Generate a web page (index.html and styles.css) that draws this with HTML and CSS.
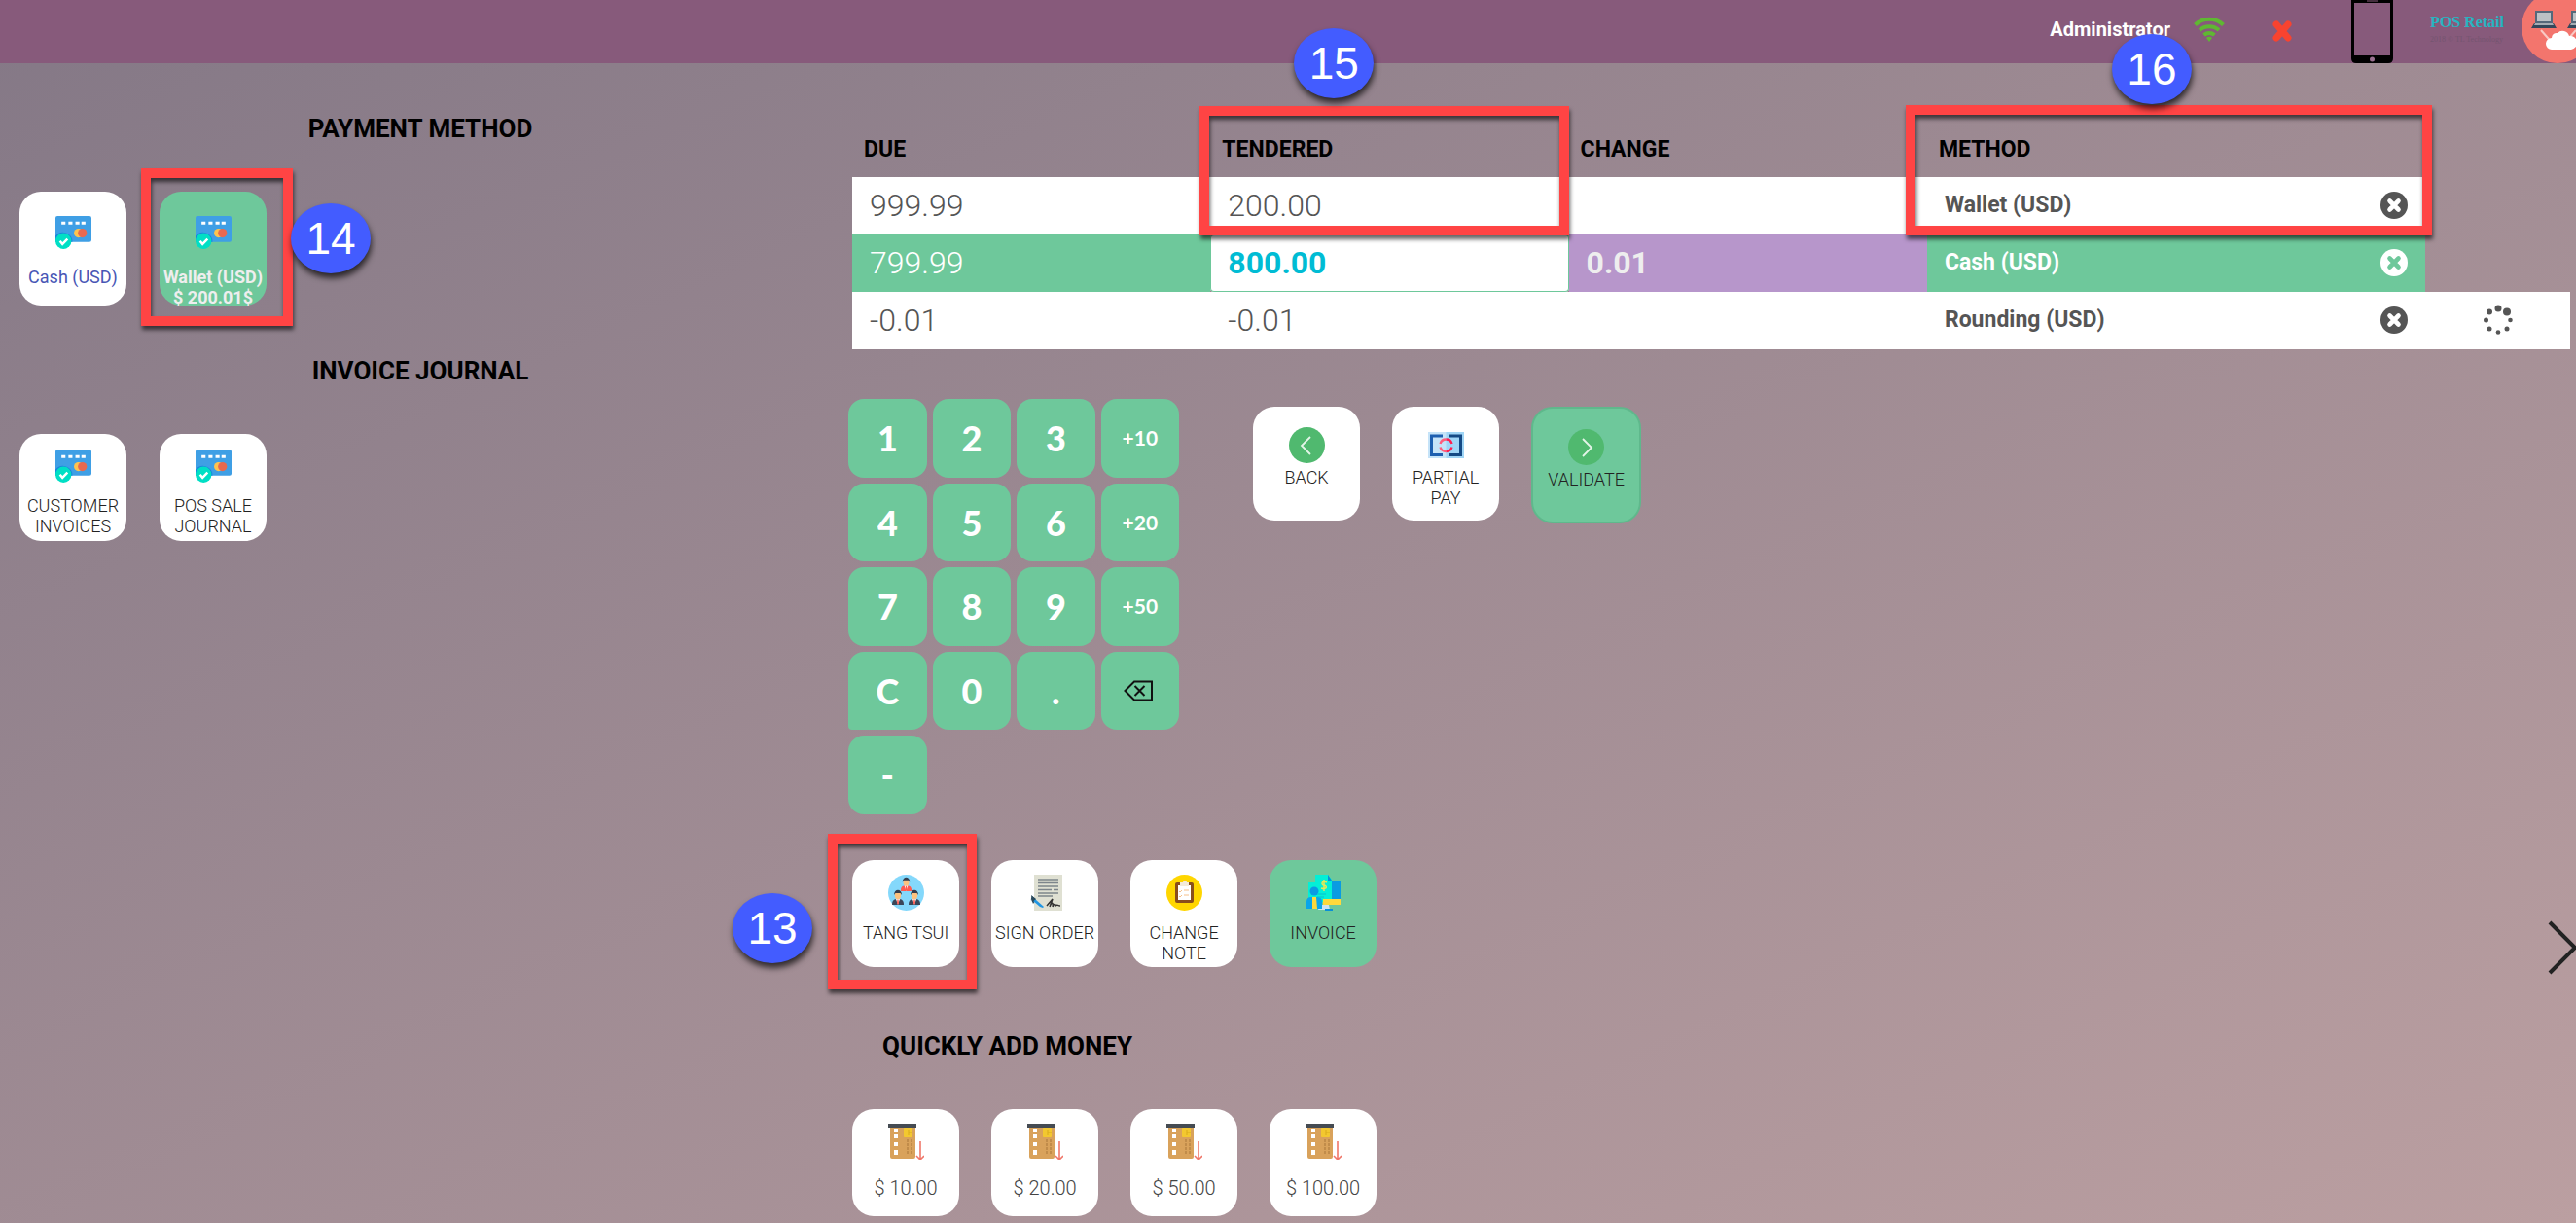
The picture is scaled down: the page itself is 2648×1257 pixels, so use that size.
FILE: index.html
```html
<!DOCTYPE html>
<html lang="en">
<head>
<meta charset="utf-8">
<meta name="viewport" content="width=device-width, initial-scale=1">
<title>POS Retail - Payment</title>
<link rel="stylesheet" href="styles.css">
</head>
<body>
<svg class="sprite" aria-hidden="true">
  <symbol id="i-card" viewBox="0 0 36 36">
    <rect x="0" y="2" width="36" height="26" rx="2" fill="#3f9fe5"/>
    <path d="M6 9h4M13 9h4M20 9h4M26 9h4" stroke="#fff" stroke-width="3"/>
    <path d="M0 22A9.500 9.500 0 0 1 17 28H0z" fill="#1b83dc"/>
    <circle cx="23" cy="19" r="4.500" fill="#ffc34d"/>
    <circle cx="27" cy="19" r="4.500" fill="#e8694f"/>
    <circle cx="8" cy="27" r="8" fill="#00dfc5"/>
    <path d="M4.500 27l2.500 3 5-5" fill="none" stroke="#fff" stroke-width="2.400"/>
  </symbol>
  <symbol id="i-remove" viewBox="0 0 28 28">
    <circle cx="14" cy="14" r="14" fill="currentColor"/>
    <path d="M9.500 9.500l9 9M18.500 9.500l-9 9" stroke="var(--cross)" stroke-width="4.600" stroke-linecap="round"/>
  </symbol>
  <symbol id="i-slot" viewBox="0 0 37 37">
    <rect x="2" y="1" width="26" height="35" rx="2" fill="#d9a25b"/>
    <rect x="0" y="0" width="29" height="4" fill="#454b52"/>
    <path d="M6 5h4v3H6zM6 11h4v4H6zM6 19h4v4H6zM6 27h4v5H6z" fill="#fff"/>
    <rect x="16" y="4" width="9" height="10" rx="1" fill="#f3c82f"/>
    <path d="M21 6v6M21 9h4" stroke="#d9aa1c" stroke-width="1"/>
    <path d="M20 16v16M24 16v16" stroke="#b98546" stroke-width="1.500" stroke-dasharray="3 1"/>
    <path d="M33 18v19M29 33l4 4 4-4" fill="none" stroke="#f0776a" stroke-width="1.600"/>
  </symbol>
  <symbol id="i-person" viewBox="0 0 14 16">
    <path d="M1 16c0-5 2-6 6-6s6 1 6 6z" fill="var(--suit)"/>
    <path d="M5 10h4l-2 6z" fill="#fff"/>
    <path d="M6.400 10.500h1.200L8 14l-1 2-1-2z" fill="#ff5a4f"/>
    <ellipse cx="7" cy="6" rx="3.200" ry="4.200" fill="#fdc27f"/>
    <path d="M3 6c0-7 8-7 8 0L9.500 4h-5z" fill="#343d4d"/>
  </symbol>
</svg>

<header class="topbar">
  <span class="user">Administrator</span>
  <svg class="wifi" width="32" height="26" viewBox="0 0 32 26" role="img" aria-label="Online">
    <g fill="none" stroke="#5fb832" stroke-width="4">
      <path d="M1.500 8.500A21 21 0 0 1 30.500 8.500"/>
      <path d="M6 14A15 15 0 0 1 26 14"/>
      <path d="M10.500 19A9 9 0 0 1 21.500 19"/>
    </g>
    <path d="M13 22a4.500 4.500 0 0 1 6 0l-3 4z" fill="#5fb832"/>
  </svg>
  <button class="close" aria-label="Close session"><svg width="20" height="22" viewBox="0 0 20 22"><path d="M4 4l12 14M16 4L4 18" stroke="#f8432f" stroke-width="7" stroke-linecap="round"/></svg></button>
  <svg class="phone" width="43" height="65" viewBox="0 0 43 65" role="img" aria-label="Mobile">
    <path d="M0 0h43v60q0 5-5 5H5q-5 0-5-5zM3 3v54h37V3z" fill="#000" fill-rule="evenodd"/>
    <path d="M16 1h11" stroke="#875a7b" stroke-width="1"/>
    <circle cx="21.500" cy="61" r="2.500" fill="#9a6f90"/>
  </svg>
  <a class="brand" href="#">POS Retail<small>2018 © TL Technology</small></a>
  <svg class="cloud" width="74" height="74" viewBox="0 0 74 74" role="img" aria-label="Sync">
    <circle cx="37" cy="37" r="37" fill="#f3756d"/>
    <path d="M20 40l14 16M56 40L42 56" stroke="#f9c9c4" stroke-width="2"/>
    <g id="laptop"><rect x="14" y="20" width="18" height="13" fill="#55687a"/><rect x="16" y="22" width="14" height="9" fill="#bcc1c5"/><path d="M13 33h20l3 5H10z" fill="#33475b"/><path d="M14 33h18l1 2H13z" fill="#a5adb4"/></g>
    <use href="#laptop" x="37"/>
    <path d="M31 60a6 6 0 0 1 0-12 5 5 0 0 1 6-5 7 7 0 0 1 12 3 7 7 0 0 1 2 14z" fill="#fff"/>
  </svg>
</header>

<main class="layout">
  <section class="side">
    <h2>Payment Method</h2>
    <div class="tiles pay">
      <button class="tile tall cash"><svg><use href="#i-card"/></svg><span>Cash (USD)</span></button>
      <div class="anchor">
        <button class="tile tall wallet"><svg><use href="#i-card"/></svg><span>Wallet (USD)<br>$ 200.01$</span></button>
        <i class="frame frame-14"></i><b class="step step-14">14</b>
      </div>
    </div>
    <h2>Invoice Journal</h2>
    <div class="tiles">
      <button class="tile"><svg><use href="#i-card"/></svg><span>CUSTOMER INVOICES</span></button>
      <button class="tile"><svg><use href="#i-card"/></svg><span>POS SALE JOURNAL</span></button>
    </div>
  </section>

  <section class="work">
    <table class="lines">
      <colgroup><col><col><col><col class="c-method"><col class="c-extra"></colgroup>
      <thead>
        <tr>
          <th>Due</th>
          <th class="anchor">Tendered<i class="frame frame-15"></i><b class="step step-15">15</b></th>
          <th>Change</th>
          <th class="anchor">Method<i class="frame frame-16"></i><b class="step step-16">16</b></th>
          <td></td>
        </tr>
      </thead>
      <tbody>
        <tr>
          <td>999.99</td><td>200.00</td><td></td>
          <td class="method"><div>Wallet (USD)<button aria-label="Remove Wallet"><svg width="28" height="28"><use href="#i-remove"/></svg></button></div></td>
          <td class="none"></td>
        </tr>
        <tr class="selected">
          <td>799.99</td><td class="edit">800.00</td><td class="change">0.01</td>
          <td class="method"><div>Cash (USD)<button aria-label="Remove Cash"><svg width="28" height="28"><use href="#i-remove"/></svg></button></div></td>
          <td class="none"></td>
        </tr>
        <tr>
          <td>-0.01</td><td>-0.01</td><td></td>
          <td class="method"><div>Rounding (USD)<button aria-label="Remove Rounding"><svg width="28" height="28"><use href="#i-remove"/></svg></button></div></td>
          <td class="busy"><svg width="32" height="32" viewBox="0 0 32 32" role="img" aria-label="Loading"><g fill="#555"><circle cx="16" cy="4" r="3.500"/><circle cx="25" cy="7.500" r="4"/><circle cx="28.500" cy="16" r="2.300"/><circle cx="25" cy="25" r="2.500"/><circle cx="16" cy="28.500" r="2.300"/><circle cx="7" cy="25" r="2.500"/><circle cx="3.500" cy="16" r="2.500"/><circle cx="7" cy="7.500" r="3"/></g></svg></td>
        </tr>
      </tbody>
    </table>

    <div class="controls">
      <div class="keypad">
        <button>1</button><button>2</button><button>3</button><button class="add">+10</button>
        <button>4</button><button>5</button><button>6</button><button class="add">+20</button>
        <button>7</button><button>8</button><button>9</button><button class="add">+50</button>
        <button class="clear">C</button><button>0</button><button>.</button>
        <button aria-label="Backspace"><svg width="34" height="22" viewBox="0 0 34 22" fill="none" stroke="#111" stroke-width="2"><path d="M1.500 11L11 1.500h18v19H11z"/><path d="M11.500 6l10 10M21.500 6l-10 10"/></svg></button>
        <button>-</button>
      </div>
      <div class="tiles actions">
        <button class="tile tall"><svg viewBox="0 0 37 37"><circle cx="18.500" cy="18.500" r="18.500" fill="#50b96f"/><path d="M22 10l-9 9 9 9" fill="none" stroke="#e4f5e8" stroke-width="1.800"/></svg><span>BACK</span></button>
        <button class="tile tall"><svg viewBox="0 0 37 37"><path d="M0 5h37v27H0z" fill="#c5e3f8"/><path d="M18.500 5H37v27H18.500z" fill="#9fd5f6"/><path d="M15 9H3.500v19.500H15" fill="none" stroke="#1d5fb0" stroke-width="3"/><path d="M22 9h11.500v19.500H22" fill="none" stroke="#154a85" stroke-width="3"/><g fill="none" stroke-width="2.400"><path d="M12.500 17a6.300 6.300 0 0 1 6-4.500M12.500 20.500a6.300 6.300 0 0 0 6 4.500" stroke="#ff5d7d"/><path d="M24.500 17a6.300 6.300 0 0 0-6-4.500M24.500 20.500a6.300 6.300 0 0 1-6 4.500" stroke="#ff1f4f"/></g></svg><span>PARTIAL PAY</span></button>
        <button class="tile validate"><svg viewBox="0 0 37 37"><circle cx="18.500" cy="18.500" r="18.500" fill="#50b96f"/><path d="M15 10l9 9-9 9" fill="none" stroke="#e4f5e8" stroke-width="1.800"/></svg><span>VALIDATE</span></button>
      </div>
    </div>

    <div class="tiles options">
      <div class="anchor">
        <button class="tile"><svg viewBox="0 0 37 37"><circle cx="18.500" cy="18.500" r="18.500" fill="#84d8fb"/><use class="red" href="#i-person" x="12" y="2" width="13" height="15"/><use href="#i-person" x="3" y="15" width="14" height="16"/><use href="#i-person" x="20" y="15" width="14" height="16"/></svg><span>TANG TSUI</span></button>
        <i class="frame frame-13"></i><b class="step step-13">13</b>
      </div>
      <button class="tile"><svg viewBox="0 0 37 37"><path d="M7 0h29v37H7z" fill="#dfe0d2"/><path d="M11 5h21M11 8.500h21M11 12h21M11 15.500h14M27 15.500h5M11 19h21M11 22h15" stroke="#7d858b" stroke-width="1.500"/><path d="M5 22l4 4-3 4-2-5-1 2z" fill="#2b4a5c"/><path d="M8 25l9 8-1 1-3-1-7-6z" fill="#2196e3"/><path d="M4 21l5 4-4 3z" fill="#2b4a5c"/><path d="M20 32l6-7-3 8c2-5 4-5 3 0 2-4 3-3 3-1 2-2 2 0 5 0" fill="none" stroke="#333" stroke-width="1.500"/></svg><span>SIGN ORDER</span></button>
      <button class="tile"><svg viewBox="0 0 37 37"><circle cx="18.500" cy="18.500" r="18.500" fill="#ffd600"/><rect x="9" y="8" width="19" height="21" rx="2" fill="#8a4e1c"/><path d="M12 11h13v15H12z" fill="#fff"/><path d="M14 8h3a2 2 0 0 1 4 0h2v4h-9z" fill="#f3ead9"/><path d="M13 17l1 1 2-2M13 22l1 1 2-2M18 16h5M18 21h5" fill="none" stroke="#f5c08a" stroke-width="1"/></svg><span>CHANGE NOTE</span></button>
      <button class="tile green"><svg viewBox="0 0 37 37"><path d="M27 7h9v21H22z" fill="#0a9be2"/><path d="M10 0h13l4 5v23H3V8h7z" fill="#04efd6"/><path d="M23 0l4 6h-4z" fill="#0a8fd8"/><path d="M18 25h18v6H18z" fill="#ffd93b"/><path d="M15 31h9l1 5H13z" fill="#cfe3f4"/><path d="M20 36h8" stroke="#0a8fd8" stroke-width="2"/><circle cx="9" cy="17" r="4.500" fill="#0a9be2"/><path d="M1 35v-7q0-5 5-5h6q5 0 5 5v7z" fill="#0aa5ea"/><path d="M7 23h4l1 12H7z" fill="#ffd93b"/><path d="M12 20h9M12 23h7" stroke="#06bfd0" stroke-width="1.200"/><path d="M22 8c-6-3-6 3-3 3s4 5-3 3M19 5v12" fill="none" stroke="#e5e858" stroke-width="1.500"/></svg><span>INVOICE</span></button>
    </div>

    <h2 class="quick-title">Quickly Add Money</h2>
    <div class="tiles quick">
      <button class="tile"><svg><use href="#i-slot"/></svg><span>$ 10.00</span></button>
      <button class="tile"><svg><use href="#i-slot"/></svg><span>$ 20.00</span></button>
      <button class="tile"><svg><use href="#i-slot"/></svg><span>$ 50.00</span></button>
      <button class="tile"><svg><use href="#i-slot"/></svg><span>$ 100.00</span></button>
    </div>
  </section>
</main>
<button class="next" aria-label="Next"><svg width="30" height="56" viewBox="0 0 30 56"><path d="M2 2l26 26L2 54" fill="none" stroke="#222" stroke-width="4"/></svg></button>
</body>
</html>
```
FILE: styles.css
```css
* { box-sizing: border-box; }

:root {
  --green: #6ec89b;
  --red: #ff4444;
}

body {
  margin: 0;
  position: relative;
  min-height: 100vh;
  overflow-x: hidden;
  font-family: Roboto, "Liberation Sans", sans-serif;
  background: linear-gradient(to bottom right, #847886, #bb9fa1);
}

.sprite { display: none; }

button {
  font: inherit;
  color: inherit;
  background: none;
  border: 0;
  padding: 0;
  cursor: pointer;
}

svg { display: block; }

/* top bar */
.topbar {
  display: flex;
  justify-content: flex-end;
  height: 65px;
  overflow: hidden;
  background: #875a7b;
}

.user {
  margin: 18px 24px 0 0;
  font-size: 20px;
  line-height: 24px;
  font-weight: 700;
  color: #fff;
}

.wifi { margin: 17px 49px 0 0; }
.close { margin: 21px 61px 0 0; align-self: flex-start; }
.phone { margin-right: 38px; }

.brand {
  width: 73px;
  margin: 12px 21px 0 0;
  font: 700 16px/22px "Liberation Serif", serif;
  color: #27b5c1;
  text-decoration: none;
  white-space: nowrap;
}

.brand small {
  display: block;
  font: 400 8px/14px "Liberation Serif", serif;
  color: #745470;
}

.cloud { flex: none; margin: -9px -18px 0 0; }

/* page columns */
.layout {
  display: grid;
  grid-template-columns: 31fr 64fr;
}

h2 {
  margin: 0;
  font-size: 26px;
  line-height: 30px;
  font-weight: 700;
  text-transform: uppercase;
  color: #000;
}

.side { padding: 52px 0 0 20px; }
.side h2 { margin: 0 20px 50px 0; text-align: center; }
.side .pay { margin-bottom: 52px; }

.work { padding: 59px 6px 2px 12px; }

/* tiles */
.tiles {
  display: flex;
  align-items: flex-start;
  gap: 33px;
}

.side .tiles { gap: 34px; }

.tile {
  display: flex;
  flex-direction: column;
  align-items: center;
  gap: 12px;
  width: 110px;
  height: 110px;
  padding: 15px 3px 0;
  border-radius: 22px;
  background: #fff;
  color: #222;
  font-size: 18px;
  line-height: 21px;
  font-weight: 300;
  text-align: center;
}

.side .tile { padding-top: 14px; }

.tile svg { flex: none; width: 37px; height: 37px; }
.tile.tall { height: 117px; }
.pay .tile.tall { padding-top: 23px; gap: 17px; }
.tile.cash { color: #4856b5; font-weight: 400; }
.tile.wallet { background: var(--green); color: #eee; font-weight: 700; white-space: nowrap; }
.tile.green { background: var(--green); }
.tile.validate {
  width: 113px;
  height: 120px;
  border: 2px solid #5fb88c;
  background: var(--green);
}
.actions .tile { padding: 21px 10px 0; gap: 4px; }
.quick .tile { gap: 17px; color: #444; font-size: 20px; line-height: 24px; }

.tile use { --suit: #3b4658; }
.tile use.red { --suit: #ff5a4f; }

/* payment lines */
.lines {
  width: 100%;
  table-layout: fixed;
  border-collapse: collapse;
}

.c-method { width: 29%; }
.c-extra { width: 149px; }

.lines th {
  height: 58px;
  padding: 0 0 0 12px;
  font-size: 23px;
  font-weight: 700;
  text-align: left;
  text-transform: uppercase;
}

.lines tbody td {
  height: 59px;
  padding: 0 18px 2px;
  background: #fff;
  color: #555;
  font-size: 32px;
  font-weight: 300;
}

.lines tbody .method { font-size: 23px; font-weight: 700; }
.method div { display: flex; justify-content: space-between; align-items: center; }
.method svg { --cross: #fff; }
.lines tbody .none { background: none; }
.lines tbody .busy svg { margin: 0 auto; }

.lines tbody .selected td { background: var(--green); color: #fff; }
.lines .selected .method svg { --cross: var(--green); }
.lines tbody .selected .edit {
  background: #fff;
  color: #00bcd4;
  font-weight: 700;
  border-radius: 4px;
  box-shadow: inset 0 0 0 1px var(--green);
}
.lines tbody .selected .change { background: #b796cb; color: #eee; font-weight: 700; }
.lines tbody .selected .none { background: none; }

/* keypad and actions */
.controls {
  display: flex;
  align-items: flex-start;
  gap: 76px;
  margin: 51px 0 47px -4px;
}

.actions { padding-top: 8px; }

.keypad {
  display: grid;
  grid-template-columns: repeat(4, 1fr);
  gap: 6px;
  width: 340px;
}

.keypad button {
  display: grid;
  place-items: center;
  aspect-ratio: 1;
  border-radius: 16px;
  background: var(--green);
  color: #fff;
  font: 900 36px/40px Lato, sans-serif;
}

.keypad .add { font-size: 21px; font-weight: 700; }
.keypad .clear { border-bottom-left-radius: 4px; }

.quick-title { margin: 66px 0 50px 31px; }

/* walkthrough markers */
.anchor { position: relative; }

.frame {
  position: absolute;
  z-index: 1;
  border: 10px solid var(--red);
  filter: drop-shadow(1px 4px 2px rgba(0, 0, 0, .6));
  pointer-events: none;
}

.step {
  position: absolute;
  z-index: 2;
  width: 82px;
  height: 72px;
  border-radius: 50%;
  background: #435cff;
  box-shadow: 1px 5px 6px rgba(0, 0, 0, .7);
  color: #fff;
  font: 400 46px/72px "Liberation Sans", sans-serif;
  text-align: center;
}

.frame-13 { inset: -27px -18px -23px -25px; }
.step-13 { left: -123px; top: 34px; }
.frame-14 { inset: -24px -27px -21px -19px; }
.step-14 { left: 135px; top: 12px; }
.frame-15 { inset: -15px 0 -60px -11px; }
.step-15 { left: 86px; top: -95px; }
.frame-16 { inset: -16px -7px -60px -22px; }
.step-16 { left: 190px; top: -89px; }

.next { position: absolute; right: -1px; top: 946px; }
```
